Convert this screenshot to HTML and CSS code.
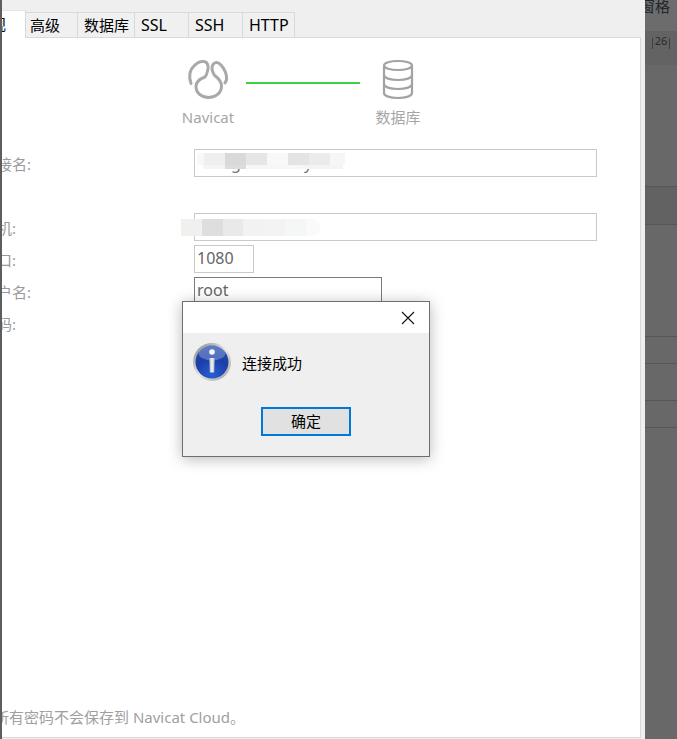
FILE: index.html
```html
<!DOCTYPE html>
<html lang="zh">
<head>
<meta charset="utf-8">
<title>Navicat</title>
<link rel="stylesheet" href="styles.css">
</head>
<body>
<div class="desktop">
  <div class="edge"></div>
  <main class="window">
    <nav class="tabs">
      <div class="tab tab-active"><span class="tab-clip">常规</span></div>
      <div class="tab tab-w52">高级</div>
      <div class="tab tab-w57">数据库</div>
      <div class="tab tab-w54 tab-latin">SSL</div>
      <div class="tab tab-w54 tab-latin">SSH</div>
      <div class="tab tab-w52b tab-latin">HTTP</div>
    </nav>
    <section class="panel">
      <div class="steps">
        <div class="step">
          <svg class="step-icon" width="44" height="42" viewBox="0 0 44 42" fill="none" stroke="#a9a9a9" stroke-width="3" stroke-linecap="round" stroke-linejoin="round">
            <path d="M5 25.500C2.500 19 3.500 12 8 8C11 4.500 14.500 3 18 3.500C22 4 23 9 21.500 13C21 15.500 20.500 17.500 19 19C13.500 21 10 24 10 28.500C10 35 15.500 39.500 22.500 39.500C29.500 39.500 35.500 35 35.500 28C35.500 23 32 20 28.500 17.300C26 14 25 9 27 6.500C29 3.500 32.500 4 35 7C38.500 11 41 17 40.500 22L39 25"/>
          </svg>
          <div class="step-label">Navicat</div>
        </div>
        <div class="step-line"></div>
        <div class="step">
          <svg class="step-icon" width="44" height="42" viewBox="0 0 44 42" fill="none" stroke="#a3a3a3" stroke-width="2.2">
            <ellipse cx="22" cy="7.500" rx="14" ry="4.500"/>
            <path d="M8 7.500V35C8 38 14 40 22 40C30 40 36 38 36 35V7.500"/>
            <path d="M8 17C8 20 14 22 22 22C30 22 36 20 36 17"/>
            <path d="M8 26C8 29 14 31 22 31C30 31 36 29 36 26"/>
          </svg>
          <div class="step-label">数据库</div>
        </div>
      </div>
      <form class="form">
        <div class="row row-name">
          <label class="label">连接名:</label>
          <div class="field field-full"><span class="leak leak-g">g</span><span class="leak leak-y">y</span><div class="blur blur-name"></div><div class="blur blur-name-low"></div></div>
        </div>
        <div class="row row-host">
          <label class="label">主机:</label>
          <div class="field field-full"><div class="blur blur-host"></div></div>
        </div>
        <div class="row">
          <label class="label">端口:</label>
          <div class="field field-port">1080</div>
        </div>
        <div class="row">
          <label class="label">用户名:</label>
          <div class="field field-user field-hover">root</div>
        </div>
        <div class="row">
          <label class="label">密码:</label>
          <div class="field field-user"></div>
        </div>
      </form>
      <p class="note">所有密码不会保存到 Navicat Cloud。</p>
    </section>
  </main>
  <aside class="backdrop">
    <div class="back-title">窗格</div>
    <div class="back-ruler"><span class="ruler-num">26</span></div>
    <div class="back-row back-h122"></div>
    <div class="back-row back-dark back-h38"></div>
    <div class="back-row back-h112"></div>
    <div class="back-row back-h27"></div>
    <div class="back-row back-h37"></div>
    <div class="back-row back-h27"></div>
    <div class="back-row back-rest"></div>
  </aside>
  <div class="dialog" role="dialog">
    <div class="dialog-title">
      <svg class="close" width="14" height="14" viewBox="0 0 14 14" fill="none" stroke="#111" stroke-width="1.100"><path d="M1 1L13 13M13 1L1 13"/></svg>
    </div>
    <div class="dialog-body">
      <div class="message">
        <svg class="info" width="40" height="40" viewBox="0 0 40 40">
          <defs>
            <linearGradient id="ring" x1="0" y1="0" x2="1" y2="1">
              <stop offset="0" stop-color="#7d8087"/><stop offset="0.5" stop-color="#e6e6e6"/><stop offset="1" stop-color="#9c9c9c"/>
            </linearGradient>
            <radialGradient id="ball" cx="0.5" cy="0.9" r="0.9">
              <stop offset="0" stop-color="#2a5ed2"/><stop offset="0.6" stop-color="#1a3ea6"/><stop offset="1" stop-color="#2c4fa6"/>
            </radialGradient>
            <linearGradient id="stem" x1="0" y1="0" x2="1" y2="0">
              <stop offset="0" stop-color="#a9b0bf"/><stop offset="0.5" stop-color="#f5f6f8"/><stop offset="1" stop-color="#a9b0bf"/>
            </linearGradient>
          </defs>
          <circle cx="20" cy="20" r="19" fill="url(#ring)"/>
          <circle cx="20" cy="20" r="16.500" fill="url(#ball)"/>
          <ellipse cx="20" cy="11" rx="13.500" ry="7.500" fill="#a9bce6" opacity="0.4"/>
          <circle cx="20" cy="10" r="2.800" fill="#f6f8fb"/>
          <path d="M17.300 16H22.700L22.200 30.500H17.800Z" fill="url(#stem)"/>
        </svg>
        <span class="message-text">连接成功</span>
      </div>
      <div class="actions"><button class="ok" type="button">确定</button></div>
    </div>
  </div>
</div>
</body>
</html>
```
FILE: styles.css
```css
* { box-sizing: border-box; }
html, body { margin: 0; padding: 0; }
body {
  width: 677px;
  height: 739px;
  overflow: hidden;
  font-family: "Noto Sans", "Noto Sans CJK SC", sans-serif;
}
.desktop {
  position: relative;
  display: flex;
  width: 677px;
  height: 739px;
  background: #686868;
}
.edge { width: 2px; background: #5e5e5e; flex: none; }

.window {
  position: relative;
  flex: none;
  width: 643px;
  height: 739px;
  background: #efefef;
  padding-top: 10px;
  padding-right: 4px;
  overflow: hidden;
}
.tabs { display: flex; align-items: flex-end; height: 28px; position: relative; z-index: 1; }
.tab {
  height: 26px;
  padding-left: 4px;
  font-size: 15px;
  line-height: 24px;
  color: #000;
  background: #f0f0f0;
  border: 1px solid #d9d9d9;
  border-left: 0;
  white-space: nowrap;
  overflow: hidden;
}
.tab-active {
  width: 24px;
  height: 28px;
  background: #fff;
  border-top: 1px solid #e4e4e4;
  border-bottom: 0;
  padding-left: 0;
  line-height: 27px;
}
.tab-clip { display: block; margin-left: -26px; }
.tab-latin { font-size: 16px; }
.tab-w52 { width: 52px; }
.tab-w57 { width: 57px; padding-left: 6px; }
.tab-w54 { width: 54px; padding-left: 6px; }
.tab-w52b { width: 52px; padding-left: 6px; }

.panel {
  display: flex;
  flex-direction: column;
  height: 701px;
  margin-top: -1px;
  background: #fff;
  border-right: 1px solid #d9d9d9;
  border-bottom: 1px solid #d9d9d9;
  border-top: 1px solid #d9d9d9;
}

.steps {
  display: flex;
  padding-left: 184px;
  padding-top: 20px;
  height: 111px;
}
.step { width: 44px; display: flex; flex-direction: column; align-items: center; }
.step-icon { display: block; flex: none; }
.step-label {
  margin-top: 7px;
  font-size: 15px;
  line-height: 20px;
  color: #a6a6a6;
  white-space: nowrap;
}
.step-line {
  flex: none;
  width: 114px;
  height: 2px;
  margin: 24px 16px 0 16px;
  background: #3ed23e;
}

.form { display: flex; flex-direction: column; gap: 4px; margin-left: -20px; }
.row { display: flex; align-items: center; height: 28px; }
.row-host { margin-top: 32px; }
.label {
  flex: none;
  width: 212px;
  font-size: 15px;
  color: #9a9a9a;
  line-height: 28px;
  padding-top: 2px;
}
.field {
  position: relative;
  height: 28px;
  flex: none;
  border: 1px solid #c9c9c9;
  background: #fff;
  padding-left: 2px;
  font-size: 16px;
  line-height: 25px;
  color: #666;
}
.field-full { width: 403px; }
.field-port { width: 60px; }
.field-user { width: 188px; }
.field-hover { border-color: #7a7a7a; }

.leak { position: absolute; top: 0; line-height: 26px; color: #777; }
.leak-g { left: 36px; }
.leak-y { left: 109px; }
.blur { position: absolute; }
.blur-name {
  left: 2px;
  top: 3px;
  width: 148px;
  height: 12px;
  background: linear-gradient(90deg,
    #f8f8f8 0 7px, #eeeff0 7px 28px, #d9d9d9 28px 49px, #e6e6e6 49px 70px,
    #f8f8f8 70px 91px, #e4e4e4 91px 112px, #ebebeb 112px 133px, #f6f6f6 133px 148px);
}
.blur-name-low {
  left: 8px;
  top: 15px;
  width: 140px;
  height: 4px;
  background: linear-gradient(90deg,
    #f5f5f5 0 22px, #dcdcdc 22px 43px, #f7f7f7 43px 100px, #f4f4f4 100px 140px);
}
.blur-host {
  left: -14px;
  top: 5px;
  width: 139px;
  height: 17px;
  border-radius: 0 8px 8px 0;
  background: linear-gradient(90deg,
    #f0f0ee 0 21px, #dedede 21px 42px, #e9e9e9 42px 62px, #f2f2f2 62px 83px,
    #f3f3f3 83px 104px, #f5f6f6 104px 125px, #fafafa 125px 139px);
}

.note {
  margin: auto 0 10px -8px;
  font-size: 15px;
  line-height: 20px;
  color: #a0a0a0;
  white-space: nowrap;
}

.backdrop {
  flex: none;
  width: 32px;
  height: 739px;
  display: flex;
  flex-direction: column;
  overflow: hidden;
  background: #686868;
}
.back-title {
  height: 31px;
  flex: none;
  margin-left: -5px;
  font-size: 15px;
  line-height: 13px;
  color: #1f262c;
  white-space: nowrap;
  background: #6c6c6c;
}
.back-ruler {
  height: 34px;
  flex: none;
  background: #636363;
  font-size: 11px;
  color: #2a2a2a;
  padding: 7px 0 0 7px;
  line-height: 5px;
}
.ruler-num {
  display: block;
  width: 18px;
  height: 11px;
  text-align: center;
  border-left: 1px solid #3f3f3f;
  border-right: 1px solid #3f3f3f;
}
.back-row { flex: none; border-bottom: 1px solid #565656; background: #686868; }
.back-dark { background: #626262; }
.back-h122 { height: 122px; }
.back-h38 { height: 38px; }
.back-h112 { height: 112px; }
.back-h27 { height: 27px; }
.back-h37 { height: 37px; }
.back-rest { flex: 1; border-bottom: 0; }

.dialog {
  position: absolute;
  left: 182px;
  top: 301px;
  width: 248px;
  height: 156px;
  display: flex;
  flex-direction: column;
  background: #efefef;
  border: 1px solid #6e6e6e;
  box-shadow: 0 2px 14px rgba(0, 0, 0, 0.28);
}
.dialog-title {
  flex: none;
  display: flex;
  justify-content: flex-end;
  align-items: center;
  height: 31px;
  padding-right: 14px;
  background: #fff;
}
.close { display: block; }
.dialog-body { flex: 1; display: flex; flex-direction: column; }
.message { display: flex; align-items: center; height: 40px; margin: 9px 0 0 9px; }
.info { flex: none; display: block; }
.message-text { margin-left: 10px; font-size: 15px; color: #000; }
.actions { display: flex; justify-content: center; padding-top: 25px; }
.ok {
  width: 90px;
  height: 29px;
  padding: 0 0 3px;
  border: 2px solid #0078d7;
  background: #e1e1e1;
  font: 15px "Noto Sans", "Noto Sans CJK SC", sans-serif;
  color: #000;
}
```
